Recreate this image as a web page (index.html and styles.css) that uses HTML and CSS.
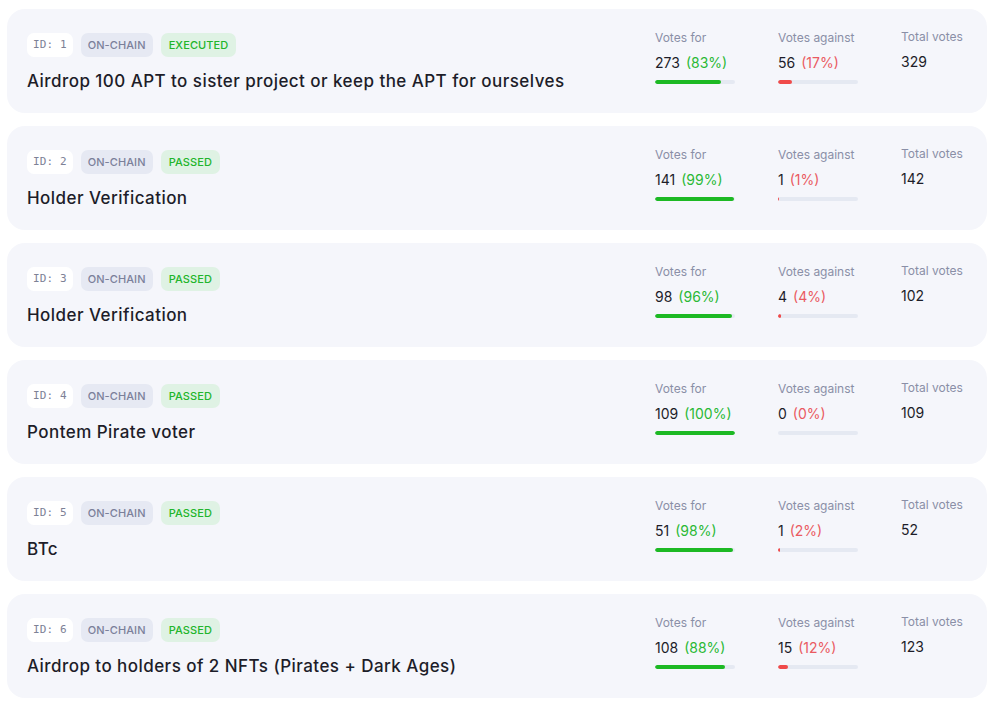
FILE: index.html
```html
<!DOCTYPE html>
<html>
<head>
<meta charset="utf-8">
<link rel="stylesheet" href="styles.css">
</head>
<body>
<div class="list">
  <div class="card">
    <div class="main">
      <div class="badges"><span class="badge id">ID: 1</span><span class="badge chain">ON-CHAIN</span><span class="badge ok">EXECUTED</span></div>
      <div class="title">Airdrop 100 APT to sister project or keep the APT for ourselves</div>
    </div>
    <div class="stat"><div class="label">Votes for</div><div class="value">273<span class="pct green">(83%)</span></div><div class="track"><div class="fill green-bg" style="width:83%"></div></div></div>
    <div class="stat"><div class="label">Votes against</div><div class="value">56<span class="pct red">(17%)</span></div><div class="track"><div class="fill red-bg" style="width:17%"></div></div></div>
    <div class="stat total"><div class="label">Total votes</div><div class="value">329</div></div>
  </div>
  <div class="card">
    <div class="main">
      <div class="badges"><span class="badge id">ID: 2</span><span class="badge chain">ON-CHAIN</span><span class="badge ok">PASSED</span></div>
      <div class="title">Holder Verification</div>
    </div>
    <div class="stat"><div class="label">Votes for</div><div class="value">141<span class="pct green">(99%)</span></div><div class="track"><div class="fill green-bg" style="width:99%"></div></div></div>
    <div class="stat"><div class="label">Votes against</div><div class="value">1<span class="pct red">(1%)</span></div><div class="track"><div class="fill red-bg" style="width:1%"></div></div></div>
    <div class="stat total"><div class="label">Total votes</div><div class="value">142</div></div>
  </div>
  <div class="card">
    <div class="main">
      <div class="badges"><span class="badge id">ID: 3</span><span class="badge chain">ON-CHAIN</span><span class="badge ok">PASSED</span></div>
      <div class="title">Holder Verification</div>
    </div>
    <div class="stat"><div class="label">Votes for</div><div class="value">98<span class="pct green">(96%)</span></div><div class="track"><div class="fill green-bg" style="width:96%"></div></div></div>
    <div class="stat"><div class="label">Votes against</div><div class="value">4<span class="pct red">(4%)</span></div><div class="track"><div class="fill red-bg" style="width:4%"></div></div></div>
    <div class="stat total"><div class="label">Total votes</div><div class="value">102</div></div>
  </div>
  <div class="card">
    <div class="main">
      <div class="badges"><span class="badge id">ID: 4</span><span class="badge chain">ON-CHAIN</span><span class="badge ok">PASSED</span></div>
      <div class="title">Pontem Pirate voter</div>
    </div>
    <div class="stat"><div class="label">Votes for</div><div class="value">109<span class="pct green">(100%)</span></div><div class="track"><div class="fill green-bg" style="width:100%"></div></div></div>
    <div class="stat"><div class="label">Votes against</div><div class="value">0<span class="pct red">(0%)</span></div><div class="track"><div class="fill red-bg" style="width:0%"></div></div></div>
    <div class="stat total"><div class="label">Total votes</div><div class="value">109</div></div>
  </div>
  <div class="card">
    <div class="main">
      <div class="badges"><span class="badge id">ID: 5</span><span class="badge chain">ON-CHAIN</span><span class="badge ok">PASSED</span></div>
      <div class="title">BTc</div>
    </div>
    <div class="stat"><div class="label">Votes for</div><div class="value">51<span class="pct green">(98%)</span></div><div class="track"><div class="fill green-bg" style="width:98%"></div></div></div>
    <div class="stat"><div class="label">Votes against</div><div class="value">1<span class="pct red">(2%)</span></div><div class="track"><div class="fill red-bg" style="width:2%"></div></div></div>
    <div class="stat total"><div class="label">Total votes</div><div class="value">52</div></div>
  </div>
  <div class="card">
    <div class="main">
      <div class="badges"><span class="badge id">ID: 6</span><span class="badge chain">ON-CHAIN</span><span class="badge ok">PASSED</span></div>
      <div class="title">Airdrop to holders of 2 NFTs (Pirates + Dark Ages)</div>
    </div>
    <div class="stat"><div class="label">Votes for</div><div class="value">108<span class="pct green">(88%)</span></div><div class="track"><div class="fill green-bg" style="width:88%"></div></div></div>
    <div class="stat"><div class="label">Votes against</div><div class="value">15<span class="pct red">(12%)</span></div><div class="track"><div class="fill red-bg" style="width:12%"></div></div></div>
    <div class="stat total"><div class="label">Total votes</div><div class="value">123</div></div>
  </div>
</div>
</body>
</html>
```
FILE: styles.css
```css
* { box-sizing: border-box; }
html, body { margin: 0; padding: 0; background: #ffffff; }
body { font-family: Inter, "Liberation Sans", sans-serif; color: #1d1d29; }
.list { display: flex; flex-direction: column; gap: 13px; padding: 9px 6px 0 7px; }
.card {
  background: #f5f6fb;
  border-radius: 18px;
  height: 104px;
  padding: 0 20px 0 20px;
  display: grid;
  grid-template-columns: 1fr 123px 123px 66px;
  align-items: start;
}
.main { padding-top: 24px; display: flex; flex-direction: column; gap: 12px; }
.badges { display: flex; gap: 8px; }
.badge {
  height: 24px; line-height: 24px; padding: 0 8px; border-radius: 7px;
  font-size: 11px; font-weight: 500; letter-spacing: 0.1px;
}
.badge.id { background: #ffffff; color: #7d8196; font-family: "DejaVu Sans Mono", "Liberation Mono", monospace; font-size: 11px; padding: 0 6px; }
.badge.chain { background: #e6e9f3; color: #7b809a; padding: 0 7px; }
.badge.ok { background: #dff2e4; color: #22b52b; }
.title { font-size: 17px; font-weight: 500; line-height: 24px; color: #1d1d29; letter-spacing: 0.45px; white-space: nowrap; }
.stat { padding-top: 21px; }
.stat.total { padding-top: 20px; }
.label { font-size: 12px; line-height: 16px; color: #8a8fa7; white-space: nowrap; }
.value { margin-top: 7px; font-size: 14px; line-height: 20px; color: #1d1d29; white-space: nowrap; }
.pct { margin-left: 6px; }
.green { color: #2ab935; }
.red { color: #ea5a61; }
.track { margin-top: 7px; width: 80px; height: 4px; border-radius: 2px; background: #e5e9f2; overflow: hidden; }
.fill { height: 100%; border-radius: 2px; }
.green-bg { background: #1db924; }
.red-bg { background: #f04a4a; }
```
